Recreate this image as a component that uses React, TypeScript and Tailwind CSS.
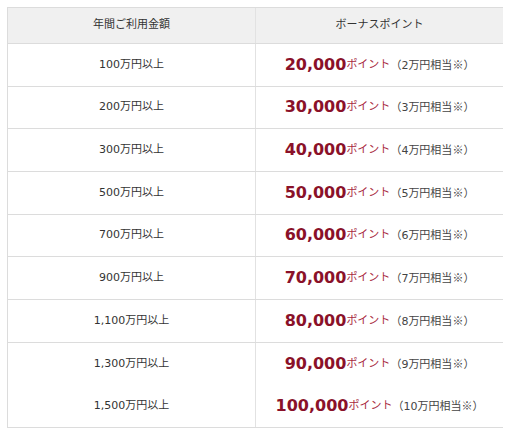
const rows = [
  { amount: "100万円以上", point: "20,000", yen: "2" },
  { amount: "200万円以上", point: "30,000", yen: "3" },
  { amount: "300万円以上", point: "40,000", yen: "4" },
  { amount: "500万円以上", point: "50,000", yen: "5" },
  { amount: "700万円以上", point: "60,000", yen: "6" },
  { amount: "900万円以上", point: "70,000", yen: "7" },
  { amount: "1,100万円以上", point: "80,000", yen: "8" },
  { amount: "1,300万円以上", point: "90,000", yen: "9" },
  { amount: "1,500万円以上", point: "100,000", yen: "10" },
];

export default function App() {
  return (
    <div
      className="min-h-[440px] bg-white pl-[7px] pt-[7px] text-[#333]"
      style={{ fontFamily: '"DejaVu Sans", "Noto Sans CJK JP", sans-serif' }}
    >
      <div className="w-[496px] border-l border-t border-[#dcdcdc]">
        {/* 見出し */}
        <div className="flex h-[36px] border-b border-[#dcdcdc] bg-[#f0f0f0] text-[11px]">
          <div className="flex w-[248px] items-center justify-center border-r border-[#e2e2e2]">
            年間ご利用金額
          </div>
          <div className="flex flex-1 items-center justify-center">
            ボーナスポイント
          </div>
        </div>

        {rows.map((r, i) => (
          <div
            key={r.amount}
            className={
              "flex h-[42.67px] border-[#dcdcdc] " +
              (i === 7 ? "" : "border-b")
            }
          >
            <div className="flex w-[248px] items-center justify-center border-r border-[#e2e2e2] text-[11px]">
              {r.amount}
            </div>
            <div className="flex flex-1 items-center justify-center">
              <span className="text-[16px] font-bold leading-none text-[#8a1129]">
                {r.point}
              </span>
              <span className="text-[11px] text-[#a8293e]">ポイント</span>
              <span className="text-[11px] text-[#444]">
                （{r.yen}万円相当
                <span className="font-['Noto_Sans_CJK_JP',sans-serif]">※</span>）
              </span>
            </div>
          </div>
        ))}
      </div>
    </div>
  );
}
